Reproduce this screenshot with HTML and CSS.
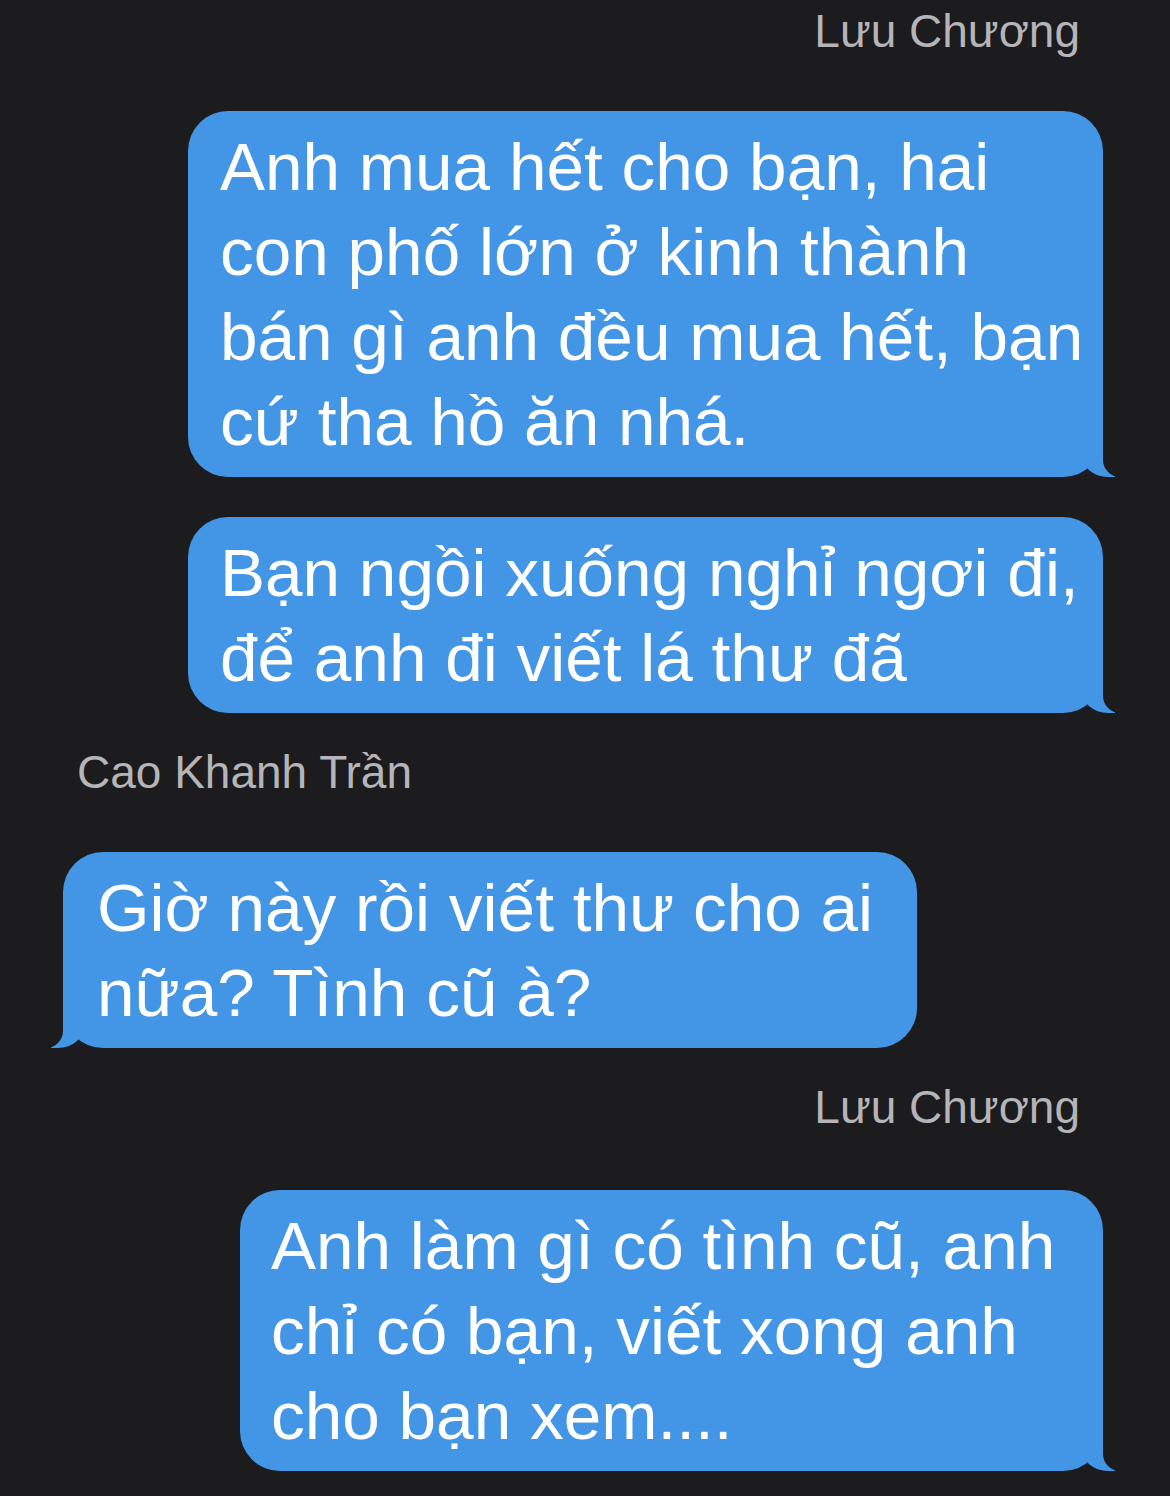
FILE: index.html
```html
<!DOCTYPE html>
<html lang="vi">
<head>
<meta charset="utf-8">
<title>Tin nhắn</title>
<link rel="stylesheet" href="styles.css">
</head>
<body>
<main class="chat">
  <div class="name name--right">Lưu Chương</div>
  <div class="bubble bubble--out bubble--w915">Anh mua hết cho bạn, hai<br>con phố lớn ở kinh thành<br>bán gì anh đều mua hết, bạn<br>cứ tha hồ ăn nhá.</div>
  <div class="bubble bubble--out bubble--w915">Bạn ngồi xuống nghỉ ngơi đi,<br>để anh đi viết lá thư đã</div>
  <div class="name name--left">Cao Khanh Trần</div>
  <div class="bubble bubble--in bubble--w854">Giờ này rồi viết thư cho ai<br>nữa? Tình cũ à?</div>
  <div class="name name--right">Lưu Chương</div>
  <div class="bubble bubble--out bubble--w863 bubble--last">Anh làm gì có tình cũ, anh<br>chỉ có bạn, viết xong anh<br>cho bạn xem....</div>
</main>
</body>
</html>
```

FILE: styles.css
```css
html, body {
  margin: 0;
  padding: 0;
  background: #1c1c1e;
}

body {
  width: 1170px;
  height: 1496px;
  overflow: hidden;
  font-family: "Liberation Sans", Arial, sans-serif;
}

.chat {
  display: flex;
  flex-direction: column;
  padding: 5px 67px 0 63px;
}

.name {
  font-size: 46px;
  line-height: 52px;
  color: #b5b5b9;
}

.name--right {
  align-self: flex-end;
  margin-right: 23px;
}

.name--left {
  align-self: flex-start;
  margin-left: 14px;
}

.bubble {
  position: relative;
  box-sizing: border-box;
  background: #4395e6;
  color: #ffffff;
  font-size: 67.5px;
  line-height: 85px;
  padding: 13px 0 13px 32px;
  border-radius: 40px;
  white-space: nowrap;
}

.bubble--out { align-self: flex-end; }
.bubble--in { align-self: flex-start; }

.bubble--w915 { width: 915px; }
.bubble--w854 { width: 854px; padding-left: 34px; }
.bubble--w863 { width: 863px; padding-left: 31px; }

.name + .bubble { margin-top: 54px; }
.bubble + .bubble { margin-top: 40px; }
.bubble + .name { margin-top: 33px; }
.name + .bubble--last { margin-top: 57px; }

.bubble::before,
.bubble::after {
  content: "";
  position: absolute;
  bottom: 0;
  height: 42px;
}

.bubble--out::before {
  right: -12px;
  width: 34px;
  background: #4395e6;
  border-bottom-left-radius: 27px 24px;
}

.bubble--out::after {
  right: -44px;
  width: 44px;
  background: #1c1c1e;
  border-bottom-left-radius: 17px;
}

.bubble--in::before {
  left: -12px;
  width: 34px;
  background: #4395e6;
  border-bottom-right-radius: 27px 24px;
}

.bubble--in::after {
  left: -44px;
  width: 44px;
  background: #1c1c1e;
  border-bottom-right-radius: 17px;
}
```
